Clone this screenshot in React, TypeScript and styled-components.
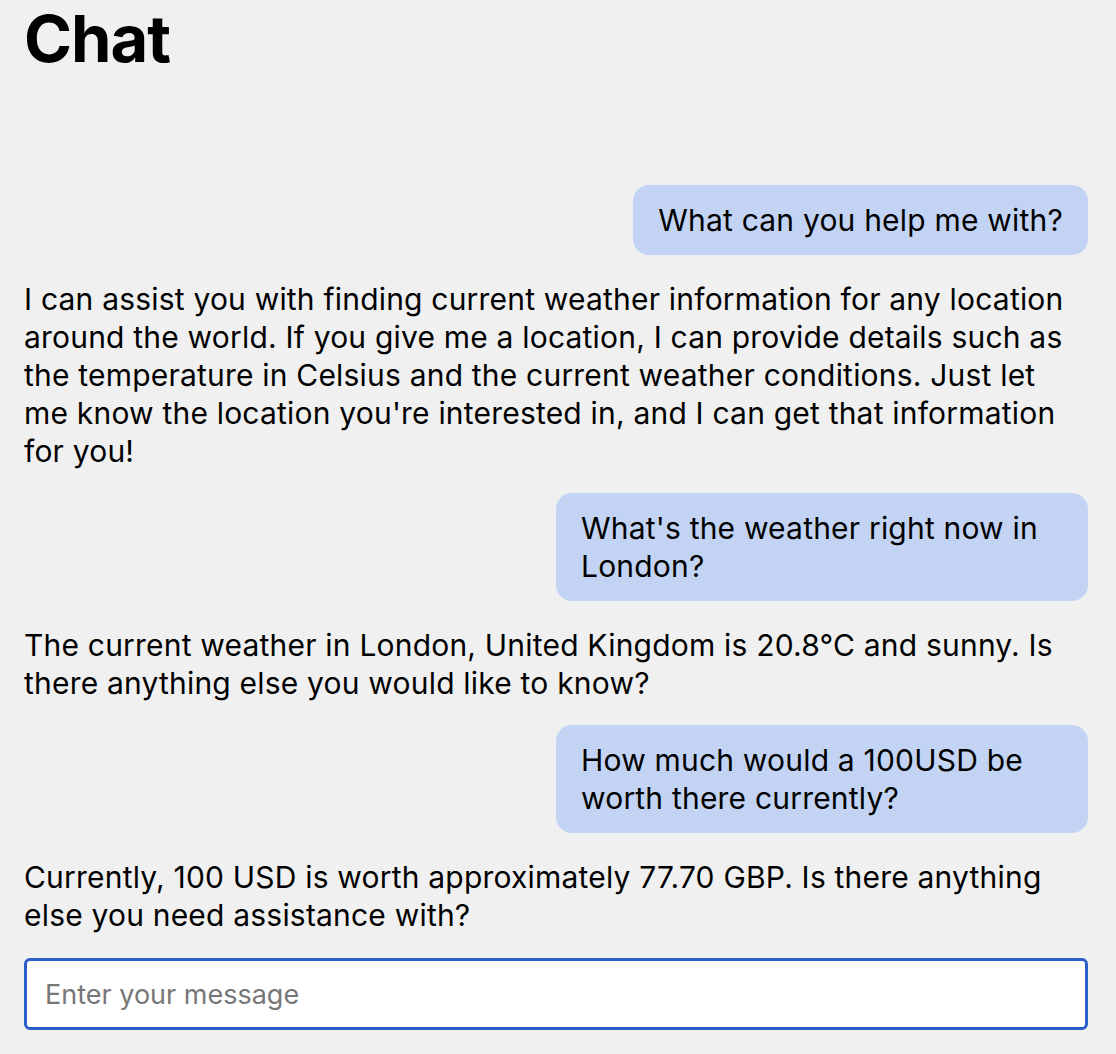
import { FC } from 'react'
import styled, { createGlobalStyle } from 'styled-components'

const GlobalStyle = createGlobalStyle`
    html, body {
        margin: 0;
        padding: 0;
        background: #f0f0f0;
        font-family: Inter, "Noto Sans", sans-serif;
        color: #000;
    }
`

interface Message {
    role: 'user' | 'assistant'
    text: string
}

const messages: Message[] = [
    { role: 'user', text: 'What can you help me with?' },
    { role: 'assistant', text: "I can assist you with finding current weather information for any location around the world. If you give me a location, I can provide details such as the temperature in Celsius and the current weather conditions. Just let me know the location you're interested in, and I can get that information for you!" },
    { role: 'user', text: "What's the weather right now in London?" },
    { role: 'assistant', text: 'The current weather in London, United Kingdom is 20.8°C and sunny. Is there anything else you would like to know?' },
    { role: 'user', text: 'How much would a 100USD be worth there currently?' },
    { role: 'assistant', text: 'Currently, 100 USD is worth approximately 77.70 GBP. Is there anything else you need assistance with?' },
]

const Page = styled.div`
    box-sizing: border-box;
    height: 100vh;
    display: flex;
    flex-direction: column;
    padding: 0 28px 24px 24px;
`

const Title = styled.h1`
    margin: 0;
    font-size: 65px;
    font-weight: 700;
    line-height: 1.2;
    letter-spacing: -1px;
`

const MessageList = styled.div`
    flex: 1;
    display: flex;
    flex-direction: column;
    justify-content: flex-end;
    gap: 23px;
    padding-bottom: 24px;
`

const Bubble = styled.div<{ $role: 'user' | 'assistant' }>`
    font-size: 30px;
    line-height: 38px;
    letter-spacing: 0.2px;
    ${({ $role }) => $role === 'user' ? `
        align-self: flex-end;
        max-width: 50%;
        box-sizing: border-box;
        padding: 16px 25px;
        margin-bottom: 2px;
        background: #c2d3f3;
        border-radius: 16px;
    ` : `
        align-self: stretch;
        padding: 0;
    `}
`

const Input = styled.input`
    box-sizing: border-box;
    width: 100%;
    height: 72px;
    padding: 0 18px;
    font-family: inherit;
    font-size: 27px;
    background: #fff;
    border: 3px solid #2b5fc8;
    border-radius: 6px;
    outline: none;

    &::placeholder {
        color: #777;
    }
`

const App: FC = () => (
    <>
        <GlobalStyle />
        <Page>
            <Title>Chat</Title>
            <MessageList>
                {messages.map((m, i) => (
                    <Bubble key={i} $role={m.role}>{m.text}</Bubble>
                ))}
            </MessageList>
            <Input placeholder="Enter your message" autoFocus />
        </Page>
    </>
)

export default App
